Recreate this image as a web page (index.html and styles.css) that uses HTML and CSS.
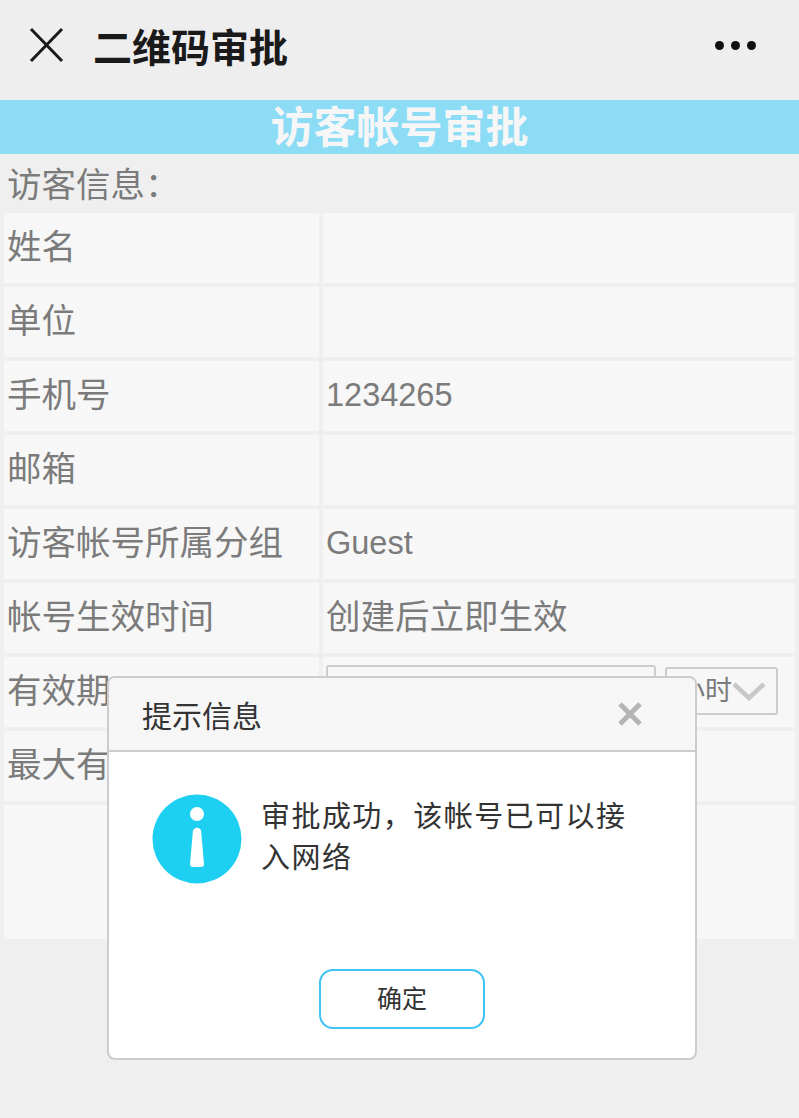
FILE: index.html
```html
<!DOCTYPE html>
<html>
<head>
    <meta charset="utf-8">
    <title>二维码审批</title>
    <link rel="stylesheet" href="styles.css">
</head>
<body>
    <div class="topbar">
        <svg class="close-icon" width="36" height="36" viewBox="0 0 36 36">
            <path d="M2 2L33 34M33 2L2 34" stroke="#1a1a1a" stroke-width="3" fill="none"/>
        </svg>
        <span class="topbar-title">二维码审批</span>
        <span class="dots"><i></i><i></i><i></i></span>
    </div>

    <div class="banner">访客帐号审批</div>
    <div class="section-label">访客信息：</div>

    <div class="form-grid">
        <div class="cell">姓名</div>
        <div class="cell"></div>
        <div class="cell">单位</div>
        <div class="cell"></div>
        <div class="cell">手机号</div>
        <div class="cell cell-latin">1234265</div>
        <div class="cell">邮箱</div>
        <div class="cell"></div>
        <div class="cell">访客帐号所属分组</div>
        <div class="cell cell-latin">Guest</div>
        <div class="cell">帐号生效时间</div>
        <div class="cell">创建后立即生效</div>
        <div class="cell">有效期</div>
        <div class="cell cell-inputs">
            <div class="fake-input"></div>
            <div class="fake-select">
                <span>小时</span>
                <svg width="34" height="20" viewBox="0 0 34 20">
                    <path d="M2 3L17 17L32 3" stroke="#c8c8c8" stroke-width="4.500" fill="none"/>
                </svg>
            </div>
        </div>
        <div class="cell">最大有效时长</div>
        <div class="cell"></div>
        <div class="cell cell-wide"></div>
    </div>

    <div class="dialog">
        <div class="dialog-head">
            <span>提示信息</span>
            <svg width="24" height="24" viewBox="0 0 24 24">
                <path d="M2 2L22 22M22 2L2 22" stroke="#b4b4b4" stroke-width="5" fill="none"/>
            </svg>
        </div>
        <div class="dialog-body">
            <svg class="info-icon" width="90" height="90" viewBox="0 0 90 90">
                <circle cx="45" cy="45" r="44.5" fill="#1dd0f1"/>
                <circle cx="45" cy="20" r="7" fill="#fff"/>
                <path d="M41 36Q45 31 49 36L52 70Q52 73 49 73H41Q38 73 38 70Z" fill="#fff"/>
            </svg>
            <p class="dialog-msg">审批成功，该帐号已可以接入网络</p>
        </div>
        <div class="dialog-foot">
            <button class="ok-btn">确定</button>
        </div>
    </div>
</body>
</html>
```

FILE: styles.css
```css
body {
    margin: 0;
    height: 1118px;
    overflow: hidden;
    background-color: #efefef;
    font-family: "Liberation Sans", "Noto Sans CJK SC", sans-serif;
    color: #7b7b7b;
}

.topbar {
    height: 100px;
    background-color: #eeeeee;
    display: flex;
    align-items: center;
    padding: 0 43px 10px 29px;
    box-sizing: border-box;
}

.close-icon {
    flex: none;
}

.topbar-title {
    margin-left: 28px;
    font-size: 39px;
    font-weight: bold;
    color: #1a1a1a;
    flex: 1;
}

.dots {
    display: flex;
    gap: 7px;
}

.dots i {
    width: 9px;
    height: 9px;
    border-radius: 50%;
    background-color: #111;
}

.banner {
    height: 54px;
    line-height: 56px;
    background-color: #8cdcf6;
    color: #f6f6f6;
    font-size: 43px;
    font-weight: bold;
    text-align: center;
}

.section-label {
    height: 59px;
    line-height: 63px;
    padding-left: 7px;
    font-size: 34.500px;
}

.form-grid {
    display: grid;
    grid-template-columns: 315px 472px;
    grid-auto-rows: 70px;
    gap: 4px;
    padding-left: 4px;
}

.cell {
    background-color: #f7f7f7;
    font-size: 34.500px;
    line-height: 69px;
    padding-left: 3px;
    white-space: nowrap;
    overflow: hidden;
}

.cell-latin {
    font-size: 32.500px;
}

.cell-inputs {
    display: flex;
    align-items: flex-start;
    gap: 9px;
    padding-top: 8px;
    box-sizing: border-box;
}

.fake-input {
    width: 330px;
    height: 52px;
    border: 2px solid #cccccc;
    border-radius: 3px;
    box-sizing: border-box;
}

.fake-select {
    width: 113px;
    height: 48px;
    margin-top: 2px;
    border: 2px solid #cccccc;
    border-radius: 3px;
    box-sizing: border-box;
    display: flex;
    align-items: center;
    justify-content: flex-end;
    overflow: hidden;
    font-size: 27px;
    line-height: 44px;
    padding-right: 10px;
}

.cell-wide {
    grid-column: 1 / 3;
    height: 134px;
}

.dialog {
    position: absolute;
    left: 107px;
    top: 676px;
    width: 590px;
    height: 384px;
    box-sizing: border-box;
    background-color: #fff;
    border: 2px solid #cccccc;
    border-radius: 8px;
    overflow: hidden;
    display: flex;
    flex-direction: column;
}

.dialog-head {
    height: 74px;
    flex: none;
    box-sizing: border-box;
    background-color: #f6f6f6;
    border-bottom: 2px solid #cccccc;
    display: flex;
    align-items: center;
    justify-content: space-between;
    padding: 0 53px 0 33px;
    font-size: 30px;
    color: #333;
}

.dialog-body {
    display: flex;
    padding: 42px 60px 0 43px;
    flex: 1;
}

.info-icon {
    flex: none;
}

.dialog-msg {
    margin: 3px 0 0 19px;
    font-size: 29px;
    line-height: 41px;
    letter-spacing: 1.450px;
    color: #333;
}

.dialog-foot {
    display: flex;
    justify-content: center;
    padding-bottom: 29px;
}

.ok-btn {
    width: 166px;
    height: 60px;
    background-color: #fff;
    border: 2px solid #41c3f5;
    border-radius: 14px;
    font-family: inherit;
    font-size: 25px;
    line-height: 54px;
    color: #333;
    padding: 0;
}
```
